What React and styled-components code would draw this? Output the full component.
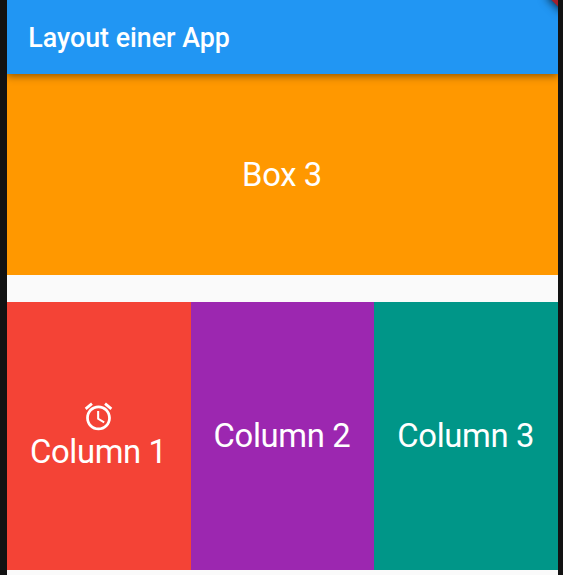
import React from "react";
import styled, { createGlobalStyle } from "styled-components";

const GlobalStyle = createGlobalStyle`
  * { box-sizing: border-box; }
  body { margin: 0; background: #121212; overflow: hidden; }
`;

const Device = styled.div`
  width: 563px;
  height: 575px;
  padding: 0 5px 0 7px;
  background: #121212;
  font-family: Roboto, sans-serif;
  color: #fff;
  overflow: hidden;
`;

const Screen = styled.main`
  position: relative;
  height: 100%;
  display: flex;
  flex-direction: column;
  background: #fafafa;
  overflow: hidden;
`;

const AppBar = styled.header`
  position: relative;
  z-index: 1;
  flex: 0 0 74px;
  padding: 2px 0 0 21.3px;
  display: flex;
  align-items: center;
  background: #2196f3;
  box-shadow: 0 2px 8px rgba(0, 0, 0, 0.45);
`;

const Title = styled.h1`
  margin: 0;
  font-size: 26.8px;
  font-weight: 500;
  line-height: 32px;
  white-space: nowrap;
`;

const DebugBanner = styled.div`
  position: absolute;
  z-index: 2;
  top: -7px;
  right: -11px;
  width: 20px;
  height: 12px;
  background: #a3202c;
  transform: rotate(45deg);
  box-shadow: 0 0 10px 1px rgba(0, 0, 0, 0.75);
`;

const Banner = styled.section`
  flex: 0 0 201px;
  display: flex;
  align-items: center;
  justify-content: center;
  background: #ff9800;
`;

const Columns = styled.section`
  flex: 0 0 268px;
  margin-top: 27px;
  display: grid;
  grid-template-columns: repeat(3, 1fr);
`;

const Column = styled.div`
  display: flex;
  flex-direction: column;
  align-items: center;
  justify-content: center;
  background: ${({ $color }) => $color};
`;

const Label = styled.span`
  margin-right: 1px;
  font-size: 32.8px;
  letter-spacing: -0.35px;
  line-height: 38px;
  white-space: nowrap;
`;

const AlarmIcon = styled.svg`
  display: block;
  width: 33px;
  height: 33px;
  margin: -1px 0 0;
  fill: currentColor;
`;

export default function App() {
  return (
    <>
      <GlobalStyle />
      <Device>
        <Screen>
          <AppBar>
            <Title>Layout einer App</Title>
          </AppBar>
          <DebugBanner />
          <Banner>
            <Label>Box 3</Label>
          </Banner>
          <Columns>
            <Column $color="#f44336">
              <AlarmIcon viewBox="0 0 24 24">
                <path d="M22 5.72l-4.6-3.86-1.29 1.53 4.6 3.86L22 5.72zM7.88 3.39L6.6 1.86 2 5.71l1.29 1.53 4.59-3.85zM12.5 8H11v6l4.75 2.85.75-1.23-4-2.37V8zM12 4c-4.97 0-9 4.03-9 9s4.02 9 9 9c4.97 0 9-4.03 9-9s-4.03-9-9-9zm0 16c-3.87 0-7-3.13-7-7s3.13-7 7-7 7 3.13 7 7-3.13 7-7 7z" />
              </AlarmIcon>
              <Label>Column 1</Label>
            </Column>
            <Column $color="#9c27b0">
              <Label>Column 2</Label>
            </Column>
            <Column $color="#009688">
              <Label>Column 3</Label>
            </Column>
          </Columns>
        </Screen>
      </Device>
    </>
  );
}
